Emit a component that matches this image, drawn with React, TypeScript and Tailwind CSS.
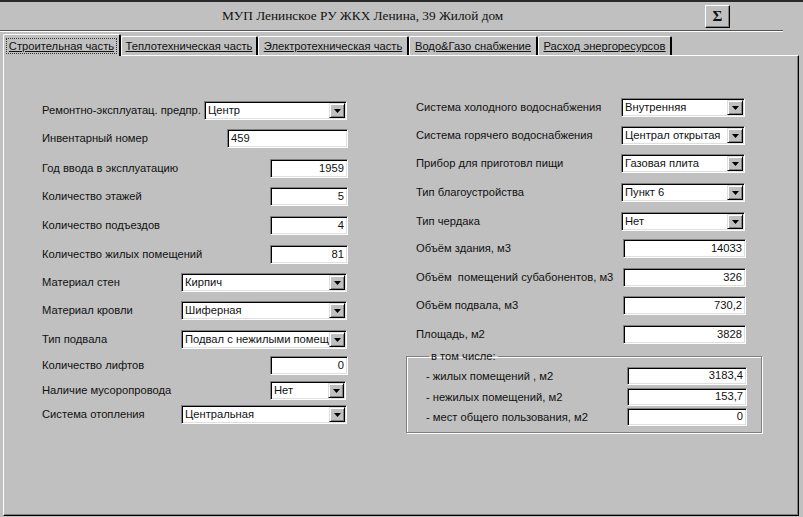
import React from "react"

type Row = {
  label: string
  kind: "input" | "select"
  value: string
  w: string
  mt: string
  right?: boolean
  extra?: string
}

const leftRows: Row[] = [
  { label: "Ремонтно-эксплуатац. предпр.", kind: "select", value: "Центр", w: "w-[143px]", mt: "mt-0", extra: "mr-[1px]" },
  { label: "Инвентарный номер", kind: "input", value: "459", w: "w-[121px]", mt: "mt-[9px]" },
  { label: "Год ввода в эксплуатацию", kind: "input", value: "1959", w: "w-[78px]", mt: "mt-[11px]", right: true },
  { label: "Количество этажей", kind: "input", value: "5", w: "w-[78px]", mt: "mt-[9px]", right: true },
  { label: "Количество подъездов", kind: "input", value: "4", w: "w-[78px]", mt: "mt-[10px]", right: true },
  { label: "Количество жилых помещений", kind: "input", value: "81", w: "w-[78px]", mt: "mt-[10px]", right: true },
  { label: "Материал стен", kind: "select", value: "Кирпич", w: "w-[166px]", mt: "mt-[9px]", extra: "mr-[1px]" },
  { label: "Материал кровли", kind: "select", value: "Шиферная", w: "w-[166px]", mt: "mt-[9px]", extra: "mr-[1px]" },
  { label: "Тип подвала", kind: "select", value: "Подвал с нежилыми помещ", w: "w-[166px]", mt: "mt-[10px]", extra: "mr-[1px]" },
  { label: "Количество лифтов", kind: "input", value: "0", w: "w-[78px]", mt: "mt-[7px]", right: true },
  { label: "Наличие мусоропровода", kind: "select", value: "Нет", w: "w-[76px]", mt: "mt-[6px]", extra: "mr-[2px]" },
  { label: "Система отопления", kind: "select", value: "Центральная", w: "w-[166px]", mt: "mt-[5px]", extra: "mr-[1px]" },
]

const rightRows: Row[] = [
  { label: "Система холодного водоснабжения", kind: "select", value: "Внутренняя", w: "w-[124px]", mt: "mt-0", extra: "mr-[1px]" },
  { label: "Система горячего водоснабжения", kind: "select", value: "Централ открытая", w: "w-[124px]", mt: "mt-[9px]", extra: "mr-[1px]" },
  { label: "Прибор для приготовл пищи", kind: "select", value: "Газовая плита", w: "w-[124px]", mt: "mt-[9px]", extra: "mr-[1px]" },
  { label: "Тип благоустройства", kind: "select", value: "Пункт 6", w: "w-[124px]", mt: "mt-[10px]", extra: "mr-[1px]" },
  { label: "Тип чердака", kind: "select", value: "Нет", w: "w-[124px]", mt: "mt-[10px]", extra: "mr-[1px]" },
  { label: "Объём здания, м3", kind: "input", value: "14033", w: "w-[123px]", mt: "mt-[8px]", right: true },
  { label: "Объём  помещений субабонентов, м3", kind: "input", value: "326", w: "w-[123px]", mt: "mt-[10px]", right: true },
  { label: "Объём подвала, м3", kind: "input", value: "730,2", w: "w-[123px]", mt: "mt-[9px]", right: true },
  { label: "Площадь, м2", kind: "input", value: "3828", w: "w-[123px]", mt: "mt-[10px]", right: true },
]

const groupRows = [
  { label: "- жилых помещений , м2", value: "3183,4", mt: "mt-[4px]" },
  { label: "- нежилых помещений, м2", value: "153,7", mt: "mt-[3px]" },
  { label: "- мест общего пользования, м2", value: "0", mt: "mt-[2px]" },
]

const tabs = [
  { label: "Строительная часть", w: "w-[118px]" },
  { label: "Теплотехническая часть", w: "w-[137px]" },
  { label: "Электротехническая часть", w: "w-[151px]" },
  { label: "Водо&Газо снабжение", w: "w-[129px]" },
  { label: "Расход энергоресурсов", w: "w-[134px]" },
]

const sunken =
  "border border-t-[#808080] border-l-[#808080] border-r-white border-b-white shadow-[inset_1px_1px_0_#000,inset_-1px_-1px_0_#dfdfdf] bg-white"

function Field({ value, w, right, h = "h-[19px]", extra = "" }: { value: string; w: string; right?: boolean; h?: string; extra?: string }) {
  return (
    <div className={`${sunken} ${w} ${h} ${extra} shrink-0 flex items-center px-[3px] ${right ? "justify-end" : "justify-start"}`}>
      <span className="leading-none">{value}</span>
    </div>
  )
}

function Select({ value, w, extra = "" }: { value: string; w: string; extra?: string }) {
  return (
    <div className={`${sunken} ${w} ${extra} shrink-0 h-[19px] flex items-stretch p-[1px]`}>
      <div className="flex-1 flex items-center pl-[2px] overflow-hidden whitespace-nowrap leading-none">{value}</div>
      <div className="w-[16px] bg-[#c0c0c0] border border-t-[#dfdfdf] border-l-[#dfdfdf] border-r-black border-b-black shadow-[inset_1px_1px_0_#fff,inset_-1px_-1px_0_#808080] flex items-center justify-center">
        <svg width="7" height="4" viewBox="0 0 7 4">
          <path d="M0 0h7L3.5 4z" fill="#000" />
        </svg>
      </div>
    </div>
  )
}

function FormRow({ row, pad = "" }: { row: Row; pad?: string }) {
  return (
    <div className={`${row.mt} ${pad} h-[19px] flex items-center justify-between`}>
      <span className="whitespace-pre">{row.label}</span>
      {row.kind === "select" ? (
        <Select value={row.value} w={row.w} extra={row.extra} />
      ) : (
        <Field value={row.value} w={row.w} right={row.right} extra={row.extra} />
      )}
    </div>
  )
}

export default function App() {
  return (
    <div
      className="w-[803px] h-[517px] bg-[#c0c0c0] border-t-2 border-[#2a2a2a] flex flex-col text-[11.2px] text-[#111] overflow-hidden"
      style={{ fontFamily: '"Liberation Sans", Arial, sans-serif' }}
    >
      {/* title bar */}
      <div className="h-[28px] flex items-center">
        <span className="pl-[222px] text-[13.3px] text-[#111] whitespace-nowrap" style={{ fontFamily: '"Liberation Serif", "Times New Roman", serif' }}>
          МУП Ленинское РУ ЖКХ Ленина, 39 Жилой дом
        </span>
        <button className="ml-auto mr-[73px] mt-[1px] w-[25px] h-[23px] bg-[#c0c0c0] border border-t-white border-l-white border-r-black border-b-black shadow-[inset_-1px_-1px_0_#808080] flex items-center justify-center text-[15px] font-bold" style={{ fontFamily: '"Liberation Serif", serif' }}>
          Σ
        </button>
      </div>
      <div className="w-[783px] border-t border-[#555] border-b border-b-white" />

      {/* tabs */}
      <div className="h-[23px] flex items-end pl-[3px] whitespace-nowrap">
        {tabs.map((t, i) =>
          i === 0 ? (
            <div key={t.label} className={`${t.w} relative top-[1px] z-10 h-[22px] bg-[#c0c0c0] border-l border-t border-white border-r-2 border-r-black rounded-t-[2px] flex items-center justify-center`}>
              <span className="underline outline-1 outline-dotted outline-[#333] px-[2px] leading-[14px]">{t.label}</span>
            </div>
          ) : (
            <div key={t.label} className={`${t.w} h-[19px] bg-[#c0c0c0] border-l border-t border-white border-r-2 border-r-black rounded-t-[2px] flex items-center justify-center`}>
              <span className="underline leading-[14px]">{t.label}</span>
            </div>
          )
        )}
      </div>

      {/* panel */}
      <div className="flex-1 mb-[1px] ml-[3px] w-[796px] border border-t-white border-l-white border-r-black border-b-black shadow-[inset_-1px_-1px_0_#808080] flex">
        <div className="ml-[38px] w-[306px] pt-[45px] flex flex-col">
          {leftRows.map((r) => (
            <FormRow key={r.label} row={r} />
          ))}
        </div>

        <div className="ml-[58px] w-[356px] pt-[42px] flex flex-col">
          {rightRows.map((r) => (
            <FormRow key={r.label} row={r} pad="pl-[10px] pr-[16px]" />
          ))}

          <fieldset className="mt-[5px] border border-[#808080] shadow-[inset_1px_1px_0_#fff,1px_1px_0_#fff] pb-[6px]">
            <legend className="ml-[22px] px-[2px] leading-[14px]">в том числе:</legend>
            {groupRows.map((g) => (
              <div key={g.label} className={`${g.mt} h-[18px] pl-[19px] pr-[14px] flex items-center justify-between`}>
                <span>{g.label}</span>
                <Field value={g.value} w="w-[120px]" right h="h-[18px]" />
              </div>
            ))}
          </fieldset>
        </div>
      </div>
    </div>
  )
}
